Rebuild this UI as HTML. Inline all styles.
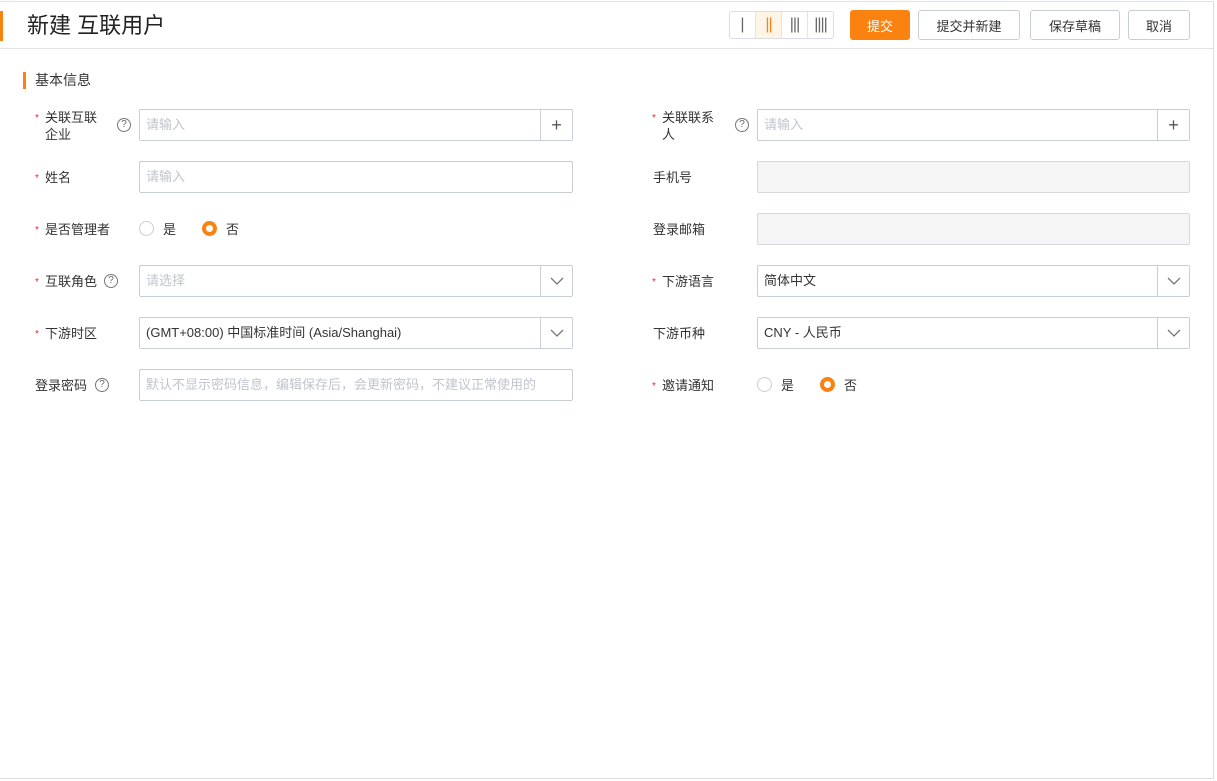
<!DOCTYPE html>
<html><head><meta charset="utf-8"><style>
*{box-sizing:border-box;margin:0;padding:0}
body{width:1217px;height:781px;background:#fff;font-family:"Liberation Sans","Noto Sans CJK SC",sans-serif;font-size:13px;color:#333;position:relative;overflow:hidden}
.a{position:absolute}
.frame{left:0;top:1px;width:1214px;height:778px;border-top:1px solid #e4e4e4;border-right:1px solid #ddd;border-bottom:1px solid #ddd}
.btn{position:absolute;top:10px;height:30px;border:1px solid #c9cdd6;border-radius:3px;background:#fff;font-size:13px;color:#333;display:flex;align-items:center;justify-content:center}
.lbl{position:absolute;font-size:13px;color:#333;line-height:17px}
.star{color:#f5222d;font-size:10px;position:absolute;left:-10px;top:1px}
.inp{position:absolute;height:32px;border:1px solid #c9cdd6;border-radius:2px;background:#fff;font-size:13px;line-height:30px;padding-left:6px;color:#333;white-space:nowrap;overflow:hidden}
.ph{color:#c0c4cc}
.dis{background:#f5f5f5;border-color:#d5d8de}
.side{position:absolute;right:0;top:0;width:32px;height:30px;border-left:1px solid #c9cdd6;display:flex;align-items:center;justify-content:center;background:#fff}
.q{display:inline-block;width:14px;height:14px;border:1px solid #777;border-radius:50%;font-size:10px;line-height:12px;text-align:center;color:#666;position:absolute}
.radio{position:absolute;width:15px;height:15px;border-radius:50%;border:1px solid #c9cdd6;background:#fff}
.radio.on{border:4px solid #fa8211}
</style></head><body>
<div class="a frame"></div>
<div class="a" style="left:0;top:11px;width:3px;height:30px;background:#fa8211"></div>
<div class="a" style="left:27px;top:12px;font-size:22px;line-height:28px;color:#222">新建 互联用户</div>
<div class="a" style="left:0;top:48px;width:1213px;height:1px;background:#e2e2e2"></div>

<div class="a" style="left:729px;top:11px;width:105px;height:28px;border:1px solid #d9dce2;border-radius:3px;display:flex">
<div style="width:26px;border-right:1px solid #e4e4e4;display:flex;justify-content:center;align-items:center;color:#666;font-size:16px">|</div>
<div style="width:26px;border-right:1px solid #e4e4e4;background:#fef5e6;display:flex;justify-content:center;align-items:center;color:#fa8211;font-size:16px;letter-spacing:-1px">||</div>
<div style="width:26px;border-right:1px solid #e4e4e4;display:flex;justify-content:center;align-items:center;color:#666;font-size:16px;letter-spacing:-1px">|||</div>
<div style="flex:1;display:flex;justify-content:center;align-items:center;color:#666;font-size:16px;letter-spacing:-1px">||||</div>
</div>
<div class="btn" style="left:850px;width:60px;background:#fa8211;border-color:#fa8211;color:#fff">提交</div>
<div class="btn" style="left:918px;width:102px">提交并新建</div>
<div class="btn" style="left:1030px;width:90px">保存草稿</div>
<div class="btn" style="left:1128px;width:62px">取消</div>

<div class="a" style="left:23px;top:72px;width:3px;height:17px;background:#fa8211"></div>
<div class="a" style="left:35px;top:71px;font-size:14px;line-height:18px;color:#333">基本信息</div>

<div class="lbl" style="left:45px;top:109px"><span class="star">*</span>关联互联<br>企业</div>
<span class="q" style="left:117px;top:118px">?</span>
<div class="inp" style="left:139px;top:109px;width:434px"><span class="ph">请输入</span><div class="side" style="font-size:18px;color:#555">+</div></div>
<div class="lbl" style="left:662px;top:109px"><span class="star">*</span>关联联系<br>人</div>
<span class="q" style="left:735px;top:118px">?</span>
<div class="inp" style="left:757px;top:109px;width:433px"><span class="ph">请输入</span><div class="side" style="font-size:18px;color:#555">+</div></div>

<div class="lbl" style="left:45px;top:169px"><span class="star">*</span>姓名</div>
<div class="inp" style="left:139px;top:161px;width:434px"><span class="ph">请输入</span></div>
<div class="lbl" style="left:653px;top:169px">手机号</div>
<div class="inp dis" style="left:757px;top:161px;width:433px"></div>

<div class="lbl" style="left:45px;top:221px"><span class="star">*</span>是否管理者</div>
<div class="radio" style="left:139px;top:221px"></div><div class="lbl" style="left:163px;top:221px">是</div>
<div class="radio on" style="left:202px;top:221px"></div><div class="lbl" style="left:226px;top:221px">否</div>
<div class="lbl" style="left:653px;top:221px">登录邮箱</div>
<div class="inp dis" style="left:757px;top:213px;width:433px"></div>

<div class="lbl" style="left:45px;top:273px"><span class="star">*</span>互联角色</div>
<span class="q" style="left:104px;top:274px">?</span>
<div class="inp" style="left:139px;top:265px;width:434px"><span class="ph">请选择</span><div class="side"><svg width="14" height="8"><path d="M1 1l6 6 6-6" fill="none" stroke="#777" stroke-width="1.3"/></svg></div></div>
<div class="lbl" style="left:662px;top:273px"><span class="star">*</span>下游语言</div>
<div class="inp" style="left:757px;top:265px;width:433px">简体中文<div class="side"><svg width="14" height="8"><path d="M1 1l6 6 6-6" fill="none" stroke="#777" stroke-width="1.3"/></svg></div></div>

<div class="lbl" style="left:45px;top:325px"><span class="star">*</span>下游时区</div>
<div class="inp" style="left:139px;top:317px;width:434px">(GMT+08:00) 中国标准时间 (Asia/Shanghai)<div class="side"><svg width="14" height="8"><path d="M1 1l6 6 6-6" fill="none" stroke="#777" stroke-width="1.3"/></svg></div></div>
<div class="lbl" style="left:653px;top:325px">下游币种</div>
<div class="inp" style="left:757px;top:317px;width:433px">CNY - 人民币<div class="side"><svg width="14" height="8"><path d="M1 1l6 6 6-6" fill="none" stroke="#777" stroke-width="1.3"/></svg></div></div>

<div class="lbl" style="left:35px;top:377px">登录密码</div>
<span class="q" style="left:95px;top:378px">?</span>
<div class="inp" style="left:139px;top:369px;width:434px"><span class="ph">默认不显示密码信息，编辑保存后，会更新密码，不建议正常使用的</span></div>
<div class="lbl" style="left:662px;top:377px"><span class="star">*</span>邀请通知</div>
<div class="radio" style="left:757px;top:377px"></div><div class="lbl" style="left:781px;top:377px">是</div>
<div class="radio on" style="left:820px;top:377px"></div><div class="lbl" style="left:844px;top:377px">否</div>
</body></html>
